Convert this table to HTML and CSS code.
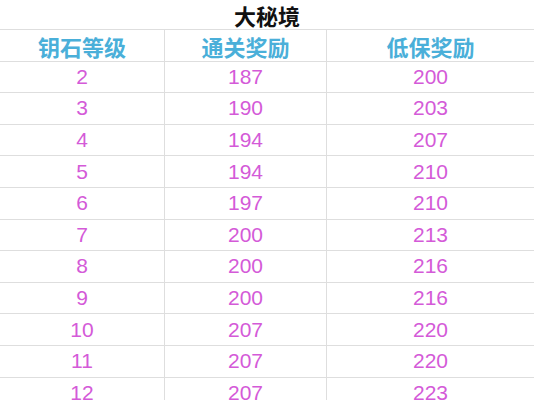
FILE: index.html
```html
<!DOCTYPE html>
<html lang="zh">
<head>
<meta charset="utf-8">
<link rel="stylesheet" href="styles.css">
</head>
<body>
<div class="page">
  <div class="title">大秘境</div>
  <div class="table">
    <div class="row head"><div class="cell">钥石等级</div><div class="cell">通关奖励</div><div class="cell">低保奖励</div></div>
    <div class="row"><div class="cell">2</div><div class="cell">187</div><div class="cell">200</div></div>
    <div class="row"><div class="cell">3</div><div class="cell">190</div><div class="cell">203</div></div>
    <div class="row"><div class="cell">4</div><div class="cell">194</div><div class="cell">207</div></div>
    <div class="row"><div class="cell">5</div><div class="cell">194</div><div class="cell">210</div></div>
    <div class="row"><div class="cell">6</div><div class="cell">197</div><div class="cell">210</div></div>
    <div class="row"><div class="cell">7</div><div class="cell">200</div><div class="cell">213</div></div>
    <div class="row"><div class="cell">8</div><div class="cell">200</div><div class="cell">216</div></div>
    <div class="row"><div class="cell">9</div><div class="cell">200</div><div class="cell">216</div></div>
    <div class="row"><div class="cell">10</div><div class="cell">207</div><div class="cell">220</div></div>
    <div class="row"><div class="cell">11</div><div class="cell">207</div><div class="cell">220</div></div>
    <div class="row"><div class="cell">12</div><div class="cell">207</div><div class="cell">223</div></div>
  </div>
</div>
</body>
</html>
```
FILE: styles.css
```css
html, body {
  margin: 0;
  padding: 0;
  background: #ffffff;
}
.page {
  width: 534px;
  height: 400px;
  overflow: hidden;
  font-family: "Liberation Sans", "Noto Sans CJK SC", sans-serif;
}
.title {
  height: 29px;
  display: flex;
  align-items: center;
  justify-content: center;
  font-family: "Noto Sans CJK SC", sans-serif;
  font-weight: 700;
  font-size: 22px;
  color: #111111;
  padding-top: 1px;
  box-sizing: border-box;
}
.row {
  display: grid;
  grid-template-columns: 165px 162px 1fr;
  height: 31.6px;
  box-sizing: border-box;
  border-top: 1px solid #dedede;
}
.cell {
  display: flex;
  align-items: center;
  justify-content: center;
  font-size: 21px;
  color: #d45ad8;
  border-right: 1px solid #dedede;
}
.cell:last-child {
  border-right: none;
}
.head .cell {
  font-family: "Noto Sans CJK SC", sans-serif;
  font-weight: 700;
  font-size: 22px;
  color: #4aafd9;
}
```
